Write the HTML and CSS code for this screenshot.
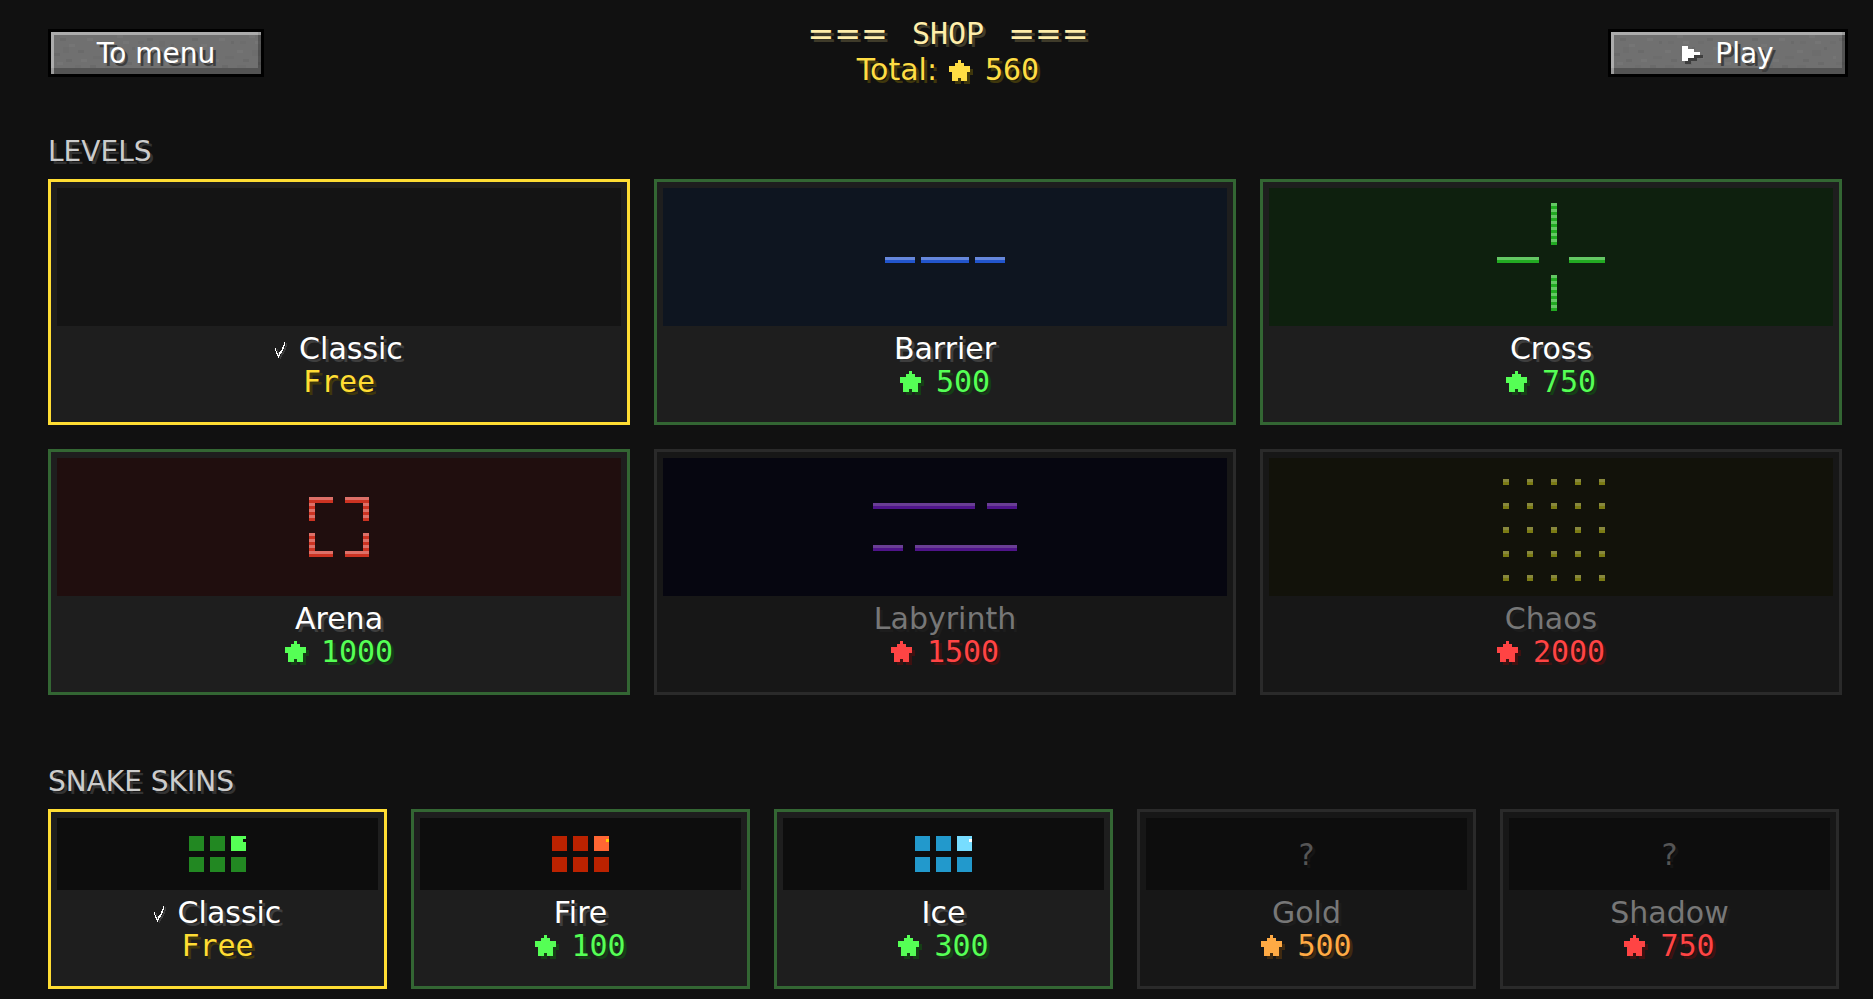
FILE: index.html
```
<!DOCTYPE html>
<html lang="en">
<head>
<meta charset="utf-8">
<title>Shop</title>
<link rel="stylesheet" href="styles.css">
</head>
<body>
<svg class="defs" aria-hidden="true">
  <defs>
    <path id="star-shape" d="M3 0h1v1h1v1h2v2h-1v3h-2v-1h-1v1h-2v-3h-1v-2h2v-1h1z"/>
    <symbol id="star" viewBox="0 0 8 8"><use class="shade" href="#star-shape" x="1" y="1"/><use href="#star-shape"/></symbol>
    <symbol id="tick" viewBox="0 0 12 17"><path d="M0 6h1v3h-1zM1 9h1v3h-1zM2 11h1v3h-1zM3 13h1v3h-1zM4 10h1v4h-1zM5 9h1v3h-1zM6 8h1v3h-1zM7 5h1v4h-1zM8 3h1v4h-1zM9 0h1v4h-1z"/></symbol>
    <pattern id="stone" width="132" height="42" patternUnits="userSpaceOnUse">
      <path fill="#6a6a6a" d="M9 6h6v3h-6zM27 18h6v3h-6zM48 9h3v3h-3zM60 27h6v3h-6zM81 15h3v3h-3zM96 6h6v3h-6zM111 24h6v3h-6zM15 27h6v3h-6zM39 33h6v3h-6zM75 30h6v3h-6zM120 12h3v3h-3zM3 21h6v3h-6z"/>
      <path fill="#757575" d="M18 12h6v3h-6zM36 6h6v3h-6zM54 18h6v3h-6zM72 9h6v3h-6zM90 24h3v3h-3zM102 15h6v3h-6zM123 18h6v3h-6zM6 30h6v3h-6zM30 27h6v3h-6zM66 3h6v3h-6zM114 30h6v3h-6z"/>
      <path fill="#6d6d6d" d="M12 15h6v6h-6zM42 24h9v3h-9zM57 9h6v3h-6zM69 18h9v6h-9zM87 9h6v3h-6zM93 30h9v3h-9zM108 9h6v6h-6zM24 33h6v3h-6zM54 33h9v3h-9zM126 27h6v3h-6z"/>
    </pattern>
    <pattern id="blue" y="3" width="6" height="6" patternUnits="userSpaceOnUse"><path fill="#6688dd" d="M0 0h6v3H0z"/><path fill="#2255cc" d="M0 3h6v3H0z"/></pattern>
    <pattern id="green" y="3" width="6" height="6" patternUnits="userSpaceOnUse"><path fill="#64c864" d="M0 0h6v3H0z"/><path fill="#22aa22" d="M0 3h6v3H0z"/></pattern>
    <pattern id="red" y="3" width="6" height="6" patternUnits="userSpaceOnUse"><path fill="#dd7068" d="M0 0h6v3H0z"/><path fill="#cc3322" d="M0 3h6v3H0z"/></pattern>
    <pattern id="purple" y="3" width="6" height="6" patternUnits="userSpaceOnUse"><path fill="#693e94" d="M0 0h6v3H0z"/><path fill="#4f148a" d="M0 3h6v3H0z"/></pattern>
    <pattern id="olive" y="3" width="6" height="6" patternUnits="userSpaceOnUse"><path fill="#88883c" d="M0 0h6v3H0z"/><path fill="#7b7b14" d="M0 3h6v3H0z"/></pattern>
  </defs>
</svg>

<header class="header">
  <button class="btn btn-menu" type="button">
    <svg class="btn-stone" aria-hidden="true"><rect width="100%" height="100%" fill="url(#stone)"/></svg>
    <span class="btn-label">To menu</span>
  </button>
  <div class="title">
    <h1 class="title-row"><span class="rule">===</span><span>SHOP</span><span class="rule">===</span></h1>
    <p class="total"><span>Total:</span><span class="amount"><svg class="star"><use href="#star"/></svg>560</span></p>
  </div>
  <button class="btn btn-play" type="button">
    <svg class="btn-stone" aria-hidden="true"><rect width="100%" height="100%" fill="url(#stone)"/></svg>
    <span class="btn-label"><svg class="arrow" viewBox="0 0 6 5"><path d="M0 0h2v1h2v1h2v1h-2v1h-2v1h-2z"/></svg>Play</span>
  </button>
</header>

<main>
  <section class="section levels">
    <h2 class="heading">LEVELS</h2>
    <div class="grid grid-levels">
      <button class="card selected" type="button">
        <span class="preview bg-classic"></span>
        <span class="name"><svg class="tick"><use href="#tick"/></svg>Classic</span>
        <span class="price free">Free</span>
      </button>
      <button class="card affordable" type="button">
        <span class="preview bg-barrier"><svg class="map" viewBox="-72 0 144 138"><path fill="url(#blue)" d="M-60 69h30v6h-30zM-24 69h48v6h-48zM30 69h30v6h-30z"/></svg></span>
        <span class="name">Barrier</span>
        <span class="price"><svg class="star"><use href="#star"/></svg>500</span>
      </button>
      <button class="card affordable" type="button">
        <span class="preview bg-cross"><svg class="map" viewBox="-72 0 144 138"><path fill="url(#green)" d="M0 15h6v42h-6zM0 87h6v36h-6zM-54 69h42v6h-42zM18 69h36v6h-36z"/></svg></span>
        <span class="name">Cross</span>
        <span class="price"><svg class="star"><use href="#star"/></svg>750</span>
      </button>
      <button class="card affordable" type="button">
        <span class="preview bg-arena"><svg class="map" viewBox="-72 0 144 138"><path fill="url(#red)" d="M-30 39h24v6h-18v18h-6zM6 39h24v24h-6v-18h-18zM-30 75h6v18h18v6h-24zM24 75h6v24h-24v-6h18z"/></svg></span>
        <span class="name">Arena</span>
        <span class="price"><svg class="star"><use href="#star"/></svg>1000</span>
      </button>
      <button class="card locked" type="button">
        <span class="preview bg-labyrinth"><svg class="map" viewBox="-72 0 144 138"><path fill="url(#purple)" d="M-72 45h102v6h-102zM42 45h30v6h-30zM-72 87h30v6h-30zM-30 87h102v6h-102z"/></svg></span>
        <span class="name">Labyrinth</span>
        <span class="price"><svg class="star"><use href="#star"/></svg>1500</span>
      </button>
      <button class="card locked" type="button">
        <span class="preview bg-chaos"><svg class="map" viewBox="-72 0 144 138"><path fill="url(#olive)" d="M-48 21h6v6h-6zM-24 21h6v6h-6zM0 21h6v6h-6zM24 21h6v6h-6zM48 21h6v6h-6zM-48 45h6v6h-6zM-24 45h6v6h-6zM0 45h6v6h-6zM24 45h6v6h-6zM48 45h6v6h-6zM-48 69h6v6h-6zM-24 69h6v6h-6zM0 69h6v6h-6zM24 69h6v6h-6zM48 69h6v6h-6zM-48 93h6v6h-6zM-24 93h6v6h-6zM0 93h6v6h-6zM24 93h6v6h-6zM48 93h6v6h-6zM-48 117h6v6h-6zM-24 117h6v6h-6zM0 117h6v6h-6zM24 117h6v6h-6zM48 117h6v6h-6z"/></svg></span>
        <span class="name">Chaos</span>
        <span class="price"><svg class="star"><use href="#star"/></svg>2000</span>
      </button>
    </div>
  </section>

  <section class="section skins">
    <h2 class="heading">SNAKE SKINS</h2>
    <div class="grid grid-skins">
      <button class="card selected" type="button">
        <span class="preview"><svg class="snake" viewBox="0 0 57 36"><path fill="#228822" d="M0 0h15v15H0zM21 0h15v15H21zM0 21h15v15H0zM21 21h15v15H21zM42 21h15v15H42z"/><path fill="#55ff55" d="M42 0h15v15H42z"/><path fill="#0d0d0d" d="M54 3h3v3h-3z"/></svg></span>
        <span class="name"><svg class="tick"><use href="#tick"/></svg>Classic</span>
        <span class="price free">Free</span>
      </button>
      <button class="card affordable" type="button">
        <span class="preview"><svg class="snake" viewBox="0 0 57 36"><path fill="#bb2200" d="M0 0h15v15H0zM21 0h15v15H21zM0 21h15v15H0zM21 21h15v15H21zM42 21h15v15H42z"/><path fill="#ff6633" d="M42 0h15v15H42z"/><path fill="#ffcc00" d="M54 3h3v3h-3z"/></svg></span>
        <span class="name">Fire</span>
        <span class="price"><svg class="star"><use href="#star"/></svg>100</span>
      </button>
      <button class="card affordable" type="button">
        <span class="preview"><svg class="snake" viewBox="0 0 57 36"><path fill="#2299cc" d="M0 0h15v15H0zM21 0h15v15H21zM0 21h15v15H0zM21 21h15v15H21zM42 21h15v15H42z"/><path fill="#77ddff" d="M42 0h15v15H42z"/><path fill="#ffffff" d="M54 3h3v3h-3z"/></svg></span>
        <span class="name">Ice</span>
        <span class="price"><svg class="star"><use href="#star"/></svg>300</span>
      </button>
      <button class="card locked" type="button">
        <span class="preview unknown">?</span>
        <span class="name">Gold</span>
        <span class="price near"><svg class="star"><use href="#star"/></svg>500</span>
      </button>
      <button class="card locked" type="button">
        <span class="preview unknown">?</span>
        <span class="name">Shadow</span>
        <span class="price"><svg class="star"><use href="#star"/></svg>750</span>
      </button>
    </div>
  </section>
</main>
</body>
</html>
```
FILE: styles.css
```
* {
  box-sizing: border-box;
}

body {
  margin: 0;
  min-height: 100vh;
  background: #111;
  color: #fff;
  font-family: "DejaVu Sans", sans-serif;
  font-size: 28px;
}

h1, h2, p {
  margin: 0;
  font-weight: 400;
}

button {
  margin: 0;
  font: inherit;
  color: inherit;
  cursor: pointer;
}

svg {
  display: block;
  flex: none;
  shape-rendering: crispEdges;
}

.defs {
  position: absolute;
  width: 0;
  height: 0;
}

/* Header */
.header {
  display: grid;
  grid-template-columns: 1fr auto 1fr;
  align-items: start;
  padding: 16px 25px 0 48px;
}

.btn {
  position: relative;
  height: 48px;
  margin-top: 13px;
  padding: 0;
  border: 3px solid #000;
  background: #707070;
}

.btn::after {
  content: "";
  position: absolute;
  inset: 0;
  box-shadow: inset 3px 3px 0 rgba(255, 255, 255, 0.42), inset -3px -6px 0 rgba(0, 0, 0, 0.26);
}

.btn-stone {
  position: absolute;
  inset: 0;
  width: 100%;
  height: 100%;
}

.btn-menu {
  width: 216px;
}

.btn-play {
  width: 240px;
  justify-self: end;
}

.btn-label {
  position: relative;
  z-index: 1;
  display: flex;
  align-items: center;
  justify-content: center;
  gap: 15px;
  text-shadow: 3px 3px 0 #3e3e3e;
}

.title-row,
.total {
  display: flex;
  align-items: center;
  justify-content: center;
  line-height: 36px;
}

.title-row {
  gap: 24px;
  color: #ffeeaa;
  font-family: "DejaVu Sans Mono", monospace;
  font-size: 30px;
  text-shadow: 3px 3px 0 #3f3b2a;
}

.rule {
  font-family: "DejaVu Sans", sans-serif;
  font-size: 32px;
}

.total {
  --shadow: #3f370c;
  gap: 12px;
  color: #ffdd44;
  font-size: 30px;
  text-shadow: 3px 3px 0 var(--shadow);
}

.amount {
  display: flex;
  align-items: center;
  gap: 12px;
  font-family: "DejaVu Sans Mono", monospace;
}

/* Sections */
.section {
  padding: 0 31px 0 48px;
}

.levels {
  margin-top: 47px;
}

.skins {
  margin-top: 70px;
}

.heading {
  margin-bottom: 11px;
  font-size: 28px;
  line-height: 33px;
  color: #ccc;
  text-shadow: 3px 3px 0 #333;
}

.grid {
  display: grid;
  gap: 24px;
}

.grid-levels {
  grid-template-columns: repeat(3, 1fr);
}

.grid-skins {
  grid-template-columns: repeat(5, 1fr);
  padding-right: 3px;
}

/* Cards */
.card {
  --price: #55ff55;
  --shadow: #153f15;
  display: flex;
  flex-direction: column;
  padding: 6px 6px 24px;
  border: 3px solid #336633;
  background: #1e1e1e;
  line-height: 33px;
}

.selected {
  border-color: #ffdd33;
}

.locked {
  --price: #ff4444;
  --shadow: #3f1111;
  border-color: #2a2a2a;
  background: #171717;
}

.preview {
  display: flex;
  align-items: center;
  justify-content: center;
  margin-bottom: 6px;
  background: #0d0d0d;
}

.grid-levels .preview {
  height: 138px;
}

.grid-skins .preview {
  height: 72px;
}

.bg-classic { background: #141414; }
.bg-barrier { background: #0e1520; }
.bg-cross { background: #0e200e; }
.bg-arena { background: #200e0e; }
.bg-labyrinth { background: #060610; }
.bg-chaos { background: #12120a; }

.unknown {
  font-size: 30px;
  color: #555;
  text-shadow: 3px 3px 0 #151515;
}

.name,
.price {
  display: flex;
  align-items: center;
  justify-content: center;
  font-size: 30px;
}

.name {
  gap: 12px;
  text-shadow: 3px 3px 0 #3e3e3e;
}

.locked .name {
  color: #777;
  text-shadow: 3px 3px 0 #1d1d1d;
}

.price {
  gap: 12px;
  color: var(--price);
  font-family: "DejaVu Sans Mono", monospace;
  text-shadow: 3px 3px 0 var(--shadow);
}

.free {
  --price: #ffdd33;
  --shadow: #3f370c;
}

.near {
  --price: #ffaa44;
  --shadow: #3f2a11;
}

/* Pixel icons */
.star {
  width: 24px;
  height: 24px;
  margin-top: 3px;
  fill: currentColor;
}

.shade {
  fill: var(--shadow);
}

.tick {
  width: 12px;
  height: 17px;
  margin-top: 4px;
  fill: currentColor;
  filter: drop-shadow(2px 1px 0 #3e3e3e);
}

.arrow {
  width: 18px;
  height: 15px;
  fill: currentColor;
  filter: drop-shadow(3px 3px 0 #3e3e3e);
}

.map {
  width: 144px;
  height: 138px;
}

.snake {
  width: 57px;
  height: 36px;
}
```
